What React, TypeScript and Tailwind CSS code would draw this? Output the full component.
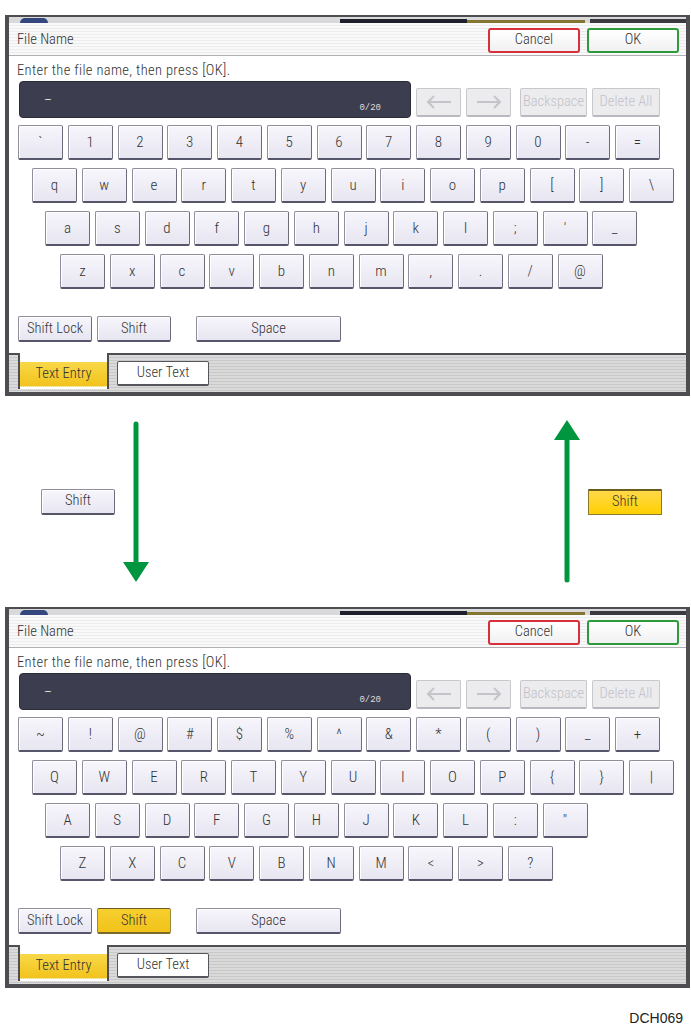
import clsx from 'clsx';

const LOWER_ROWS = [
  ['`', '1', '2', '3', '4', '5', '6', '7', '8', '9', '0', '-', '='],
  ['q', 'w', 'e', 'r', 't', 'y', 'u', 'i', 'o', 'p', '[', ']', '\\'],
  ['a', 's', 'd', 'f', 'g', 'h', 'j', 'k', 'l', ';', "'", '_'],
  ['z', 'x', 'c', 'v', 'b', 'n', 'm', ',', '.', '/', '@'],
];

const UPPER_ROWS = [
  ['~', '!', '@', '#', '$', '%', '^', '&', '*', '(', ')', '_', '+'],
  ['Q', 'W', 'E', 'R', 'T', 'Y', 'U', 'I', 'O', 'P', '{', '}', '|'],
  ['A', 'S', 'D', 'F', 'G', 'H', 'J', 'K', 'L', ':', '"'],
  ['Z', 'X', 'C', 'V', 'B', 'N', 'M', '<', '>', '?'],
];

// indent of each keyboard row, measured from the dialog edge
const ROW_INDENT = ['pl-[9px]', 'pl-[23px]', 'pl-[36px]', 'pl-[51px]'];

const labelFont = "font-['Roboto_Condensed','DejaVu_Sans_Condensed',sans-serif] font-light";
const monoFont = "font-['Liberation_Mono',monospace]";

const keyFace =
  'rounded-[2px] border border-[#8e8e9c] border-r-[#6c6c7c] border-b-2 border-b-[#56566a] bg-[linear-gradient(#f7f6fc,#e7e6f1)] shadow-[inset_1px_1px_0_#ffffff] text-[#333]';

const yellowFace =
  'rounded-[2px] border border-[#9c8a3c] border-t-[#6f5f22] border-b-2 border-b-[#7a6a2a] bg-[linear-gradient(#f6cf2e,#f1c21a)] text-[#333]';

function Key({ label }: { label: string }) {
  return (
    <div className={clsx('flex h-[35px] w-[45px] items-center justify-center text-[15px]', labelFont, keyFace)}>
      {label}
    </div>
  );
}

function WideButton({ label, width, active }: { label: string; width: string; active?: boolean }) {
  return (
    <div
      className={clsx(
        'flex h-[26px] items-center justify-center text-[14.5px]',
        labelFont,
        width,
        active ? yellowFace : keyFace
      )}
    >
      {label}
    </div>
  );
}

function DisabledButton({ children, width }: { children: React.ReactNode; width: string }) {
  return (
    <div
      className={clsx(
        'flex h-[29px] items-center justify-center rounded-[2px] border border-[#c8c8cc] border-b-2 border-b-[#b8b8be] bg-[#ececef] text-[14.5px] text-[#c2c2c8]',
        labelFont,
        width
      )}
    >
      {children}
    </div>
  );
}

function ArrowGlyph({ dir }: { dir: 'left' | 'right' }) {
  return (
    <svg width="26" height="14" viewBox="0 0 26 14" fill="none" stroke="#c4c4ca" strokeWidth="2">
      {dir === 'left' ? (
        <>
          <path d="M25 7H2" />
          <path d="M8 1L2 7l6 6" />
        </>
      ) : (
        <>
          <path d="M1 7h23" />
          <path d="M18 1l6 6-6 6" />
        </>
      )}
    </svg>
  );
}

function DialogButton({ label, tone }: { label: string; tone: 'red' | 'green' }) {
  return (
    <div
      className={clsx(
        'flex h-[25px] w-[92px] items-center justify-center rounded-[3px] border-2 bg-[linear-gradient(#ffffff,#f1f1f3)] text-[14.5px] text-[#333]',
        labelFont,
        tone === 'red' ? 'border-[#d5303c]' : 'border-[#2f9a3c]'
      )}
    >
      {label}
    </div>
  );
}

function Panel({ shifted }: { shifted: boolean }) {
  const rows = shifted ? UPPER_ROWS : LOWER_ROWS;

  return (
    <div className="mx-[5px] w-[685px] border-x-4 border-t-2 border-b-4 border-[#4d4d52] bg-[#d9d9db]">
      {/* bits of the screen underneath the dialog */}
      <div className="flex h-[6px] items-end">
        <div className="ml-[11px] h-[5px] w-[28px] rounded-t-full bg-[#33477e]" />
        <div className="flex-1" />
        <div className="h-[4px] w-[127px] bg-[#1d1f2c]" />
        <div className="h-[3px] w-[118px] bg-[#857532]" />
        <div className="ml-[5px] h-[4px] w-[96px] bg-[#3a3a40]" />
      </div>

      <div className="bg-white">
        {/* title bar */}
        <div className="flex h-[33px] items-center border-b border-[#b0b0b4] bg-[repeating-linear-gradient(180deg,#f9f9f9_0px,#f9f9f9_2px,#ececec_2px,#ececec_3px)] pl-[8px] pr-[7px] pt-[2px]">
          <span className={clsx('text-[14.5px] text-[#333]', labelFont)}>File Name</span>
          <div className="flex-1" />
          <DialogButton label="Cancel" tone="red" />
          <div className="w-[7px]" />
          <DialogButton label="OK" tone="green" />
        </div>

        <div className="pt-[8px]">
          <div className={clsx('h-[14px] pl-[8px] text-[14.5px] leading-[14px] tracking-[0.35px] text-[#333]', labelFont)}>
            Enter the file name, then press [OK].
          </div>

          {/* input + edit buttons */}
          <div className="mt-[3px] flex items-start pl-[10px]">
            <div className="flex h-[37px] w-[392px] rounded-[4px] border border-[#2a2b38] bg-[#3c3e50] pl-[24px] pr-[29px]">
              <span className={clsx('self-center text-[13px] text-[#e6e6ea]', monoFont)}>–</span>
              <div className="flex-1" />
              <span className={clsx('self-end pb-[2px] text-[9px] text-[#dcdce2]', monoFont)}>0/20</span>
            </div>
            <div className="mt-[7px] flex items-center">
              <div className="ml-[5px]">
                <DisabledButton width="w-[45px]">
                  <ArrowGlyph dir="left" />
                </DisabledButton>
              </div>
              <div className="ml-[5px]">
                <DisabledButton width="w-[45px]">
                  <ArrowGlyph dir="right" />
                </DisabledButton>
              </div>
              <div className="ml-[9px]">
                <DisabledButton width="w-[67px]">Backspace</DisabledButton>
              </div>
              <div className="ml-[5px]">
                <DisabledButton width="w-[68px]">Delete All</DisabledButton>
              </div>
            </div>
          </div>

          {/* keyboard */}
          <div className="mt-[7px] flex flex-col gap-[8px]">
            {rows.map((row, i) => (
              <div key={i} className={clsx('flex gap-[4.75px]', ROW_INDENT[i])}>
                {row.map((k) => (
                  <Key key={k} label={k} />
                ))}
              </div>
            ))}
          </div>

          <div className="mt-[27px] flex pl-[9px]">
            <WideButton label="Shift Lock" width="w-[74px]" />
            <div className="w-[5px]" />
            <WideButton label="Shift" width="w-[74px]" active={shifted} />
            <div className="w-[25px]" />
            <WideButton label="Space" width="w-[145px]" />
          </div>
          <div className="h-[11px]" />
        </div>

        {/* tab strip */}
        <div className="flex h-[39px] border-t-2 border-[#4d4d52] bg-[repeating-linear-gradient(180deg,#dadada_0px,#dadada_2px,#c8c8c8_2px,#c8c8c8_3px)]">
          <div className="w-[9px]" />
          <div className="-mt-[2px] flex h-[36px] w-[91px] flex-col border-x-2 border-[#4d4d52] bg-white">
            <div className="h-[9px]" />
            <div
              className={clsx(
                'flex h-[25px] items-center justify-center border-b border-dotted border-b-[#fff3b0] bg-[linear-gradient(#f9d84a,#f2c31c)] text-[14.5px] text-[#333]',
                labelFont
              )}
            >
              Text Entry
            </div>
          </div>
          <div
            className={clsx(
              'ml-[8px] mt-[6px] flex h-[25px] w-[92px] items-center justify-center rounded-[2px] border border-[#55555c] border-b-2 bg-white text-[14.5px] text-[#333]',
              labelFont
            )}
          >
            User Text
          </div>
        </div>
      </div>
    </div>
  );
}

function DownArrow() {
  return (
    <svg width="26" height="163" viewBox="0 0 26 163">
      <line x1="13" y1="4" x2="13" y2="146" stroke="#00963f" strokeWidth="5" strokeLinecap="round" />
      <polygon points="0,142 26,142 13,162" fill="#00963f" />
    </svg>
  );
}

function UpArrow() {
  return (
    <svg width="26" height="163" viewBox="0 0 26 163">
      <line x1="13" y1="16" x2="13" y2="160" stroke="#00963f" strokeWidth="5" strokeLinecap="round" />
      <polygon points="13,0 0,20 26,20" fill="#00963f" />
    </svg>
  );
}

export default function App() {
  return (
    <div className="h-[1032px] w-[691px] overflow-hidden bg-white pt-[15px]">
      <Panel shifted={false} />

      {/* shift toggles */}
      <div className="flex h-[211px] items-center">
        <div className="ml-[41px]">
          <WideButton label="Shift" width="w-[74px]" />
        </div>
        <div className="ml-[8px]">
          <DownArrow />
        </div>
        <div className="flex-1" />
        <UpArrow />
        <div className="ml-[8px] mr-[29px]">
          <div className="flex h-[26px] w-[74px] items-center justify-center rounded-[1px] border border-[#8c7a2c] border-t-2 border-t-[#6b5c1c] bg-[linear-gradient(#ffd84a,#ffd000)] font-['Roboto_Condensed','DejaVu_Sans_Condensed',sans-serif] text-[14.5px] font-light text-[#333]">
            Shift
          </div>
        </div>
      </div>

      <Panel shifted />

      <div className="mt-[22px] pr-[8px] text-right font-['Liberation_Sans',Arial,sans-serif] text-[14px] leading-[16px] text-[#222]">
        DCH069
      </div>
    </div>
  );
}
